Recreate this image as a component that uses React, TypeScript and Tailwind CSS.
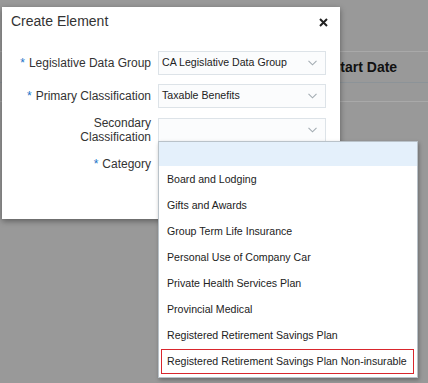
import React from "react";

const categories = [
  "Board and Lodging",
  "Gifts and Awards",
  "Group Term Life Insurance",
  "Personal Use of Company Car",
  "Private Health Services Plan",
  "Provincial Medical",
  "Registered Retirement Savings Plan",
  "Registered Retirement Savings Plan Non-insurable",
];

const Chevron = () => (
  <svg width="9" height="6" viewBox="0 0 9 6" className="text-[#a3acb3]">
    <polyline points="0.5,0.8 4.5,4.8 8.5,0.8" fill="none" stroke="currentColor" strokeWidth="1.1" />
  </svg>
);

const Select = ({ value }: { value?: string }) => (
  <div className="flex items-center justify-between w-[168px] h-[24px] border border-[#dde3e8] bg-[#fbfcfd] pl-[3px] pr-[8px] text-[10.6px] text-[#222]">
    <span>{value}</span>
    <Chevron />
  </div>
);

const Label = ({ text, required }: { text: string; required?: boolean }) => (
  <div className="w-[149px] text-right text-[12px] text-[#333] leading-[14px]">
    {required && <span className="text-[#1a73c8] mr-[4px]">*</span>}
    {text}
  </div>
);

export default function App() {
  return (
    <div
      className="relative w-[428px] h-[383px] bg-[#999999] overflow-hidden"
      style={{ fontFamily: '"Liberation Sans", Arial, sans-serif' }}
    >
      {/* page behind the dialog */}
      <div className="pt-[51px]">
        <div className="border-t border-[#a9a9a9] h-[31px] flex items-center pl-[331px] text-[14px] font-bold text-[#111]">
          Start Date
        </div>
        <div className="border-t border-[#8c9398] h-[19px]" />
        <div className="border-t border-[#a9a9a9]" />
      </div>

      {/* dialog */}
      <div className="absolute left-[2px] top-[7px] w-[338px] h-[212px] bg-white shadow-[0_2px_6px_rgba(0,0,0,0.4)]">
        <div className="flex items-start justify-between pl-[9px] pr-[12px] pt-[6px]">
          <span className="text-[14px] leading-[16px] text-[#333]">Create Element</span>
          <svg width="9" height="9" viewBox="0 0 9 9" className="mt-[5px] text-[#222]">
            <path d="M1 1 L8 8 M8 1 L1 8" stroke="currentColor" strokeWidth="2" />
          </svg>
        </div>
        <div className="flex flex-col pt-[22px]">
          <div className="flex items-center gap-[7px]">
            <Label text="Legislative Data Group" required />
            <Select value="CA Legislative Data Group" />
          </div>
          <div className="flex items-center gap-[7px] mt-[9px]">
            <Label text="Primary Classification" required />
            <Select value="Taxable Benefits" />
          </div>
          <div className="flex items-center gap-[7px] mt-[8px]">
            <div className="w-[149px] text-right text-[12px] text-[#333] leading-[14px]">
              Secondary
              <br />
              Classification
            </div>
            <Select />
          </div>
          <div className="flex items-center gap-[7px] mt-[8px] h-[24px]">
            <Label text="Category" required />
          </div>
        </div>
      </div>

      {/* dropdown list */}
      <div className="absolute left-[158px] top-[141px] w-[260px] h-[237px] bg-white border border-[#b9c2c9] shadow-[1px_2px_4px_rgba(0,0,0,0.3)] text-[10.6px] text-[#222]">
        <div className="h-[24px] bg-[#e4f0fb]" />
        {categories.map((c, i) => (
          <div key={i} className="h-[26px] flex items-center px-[2px] pt-[1px] whitespace-nowrap">
            {i === categories.length - 1 ? (
              <div className="w-[253px] h-[25px] bg-[#d9262d] p-[1px]">
                <div className="h-full bg-white flex items-center pl-[5px]">{c}</div>
              </div>
            ) : (
              <div className="pl-[6px]">{c}</div>
            )}
          </div>
        ))}
      </div>
    </div>
  );
}
